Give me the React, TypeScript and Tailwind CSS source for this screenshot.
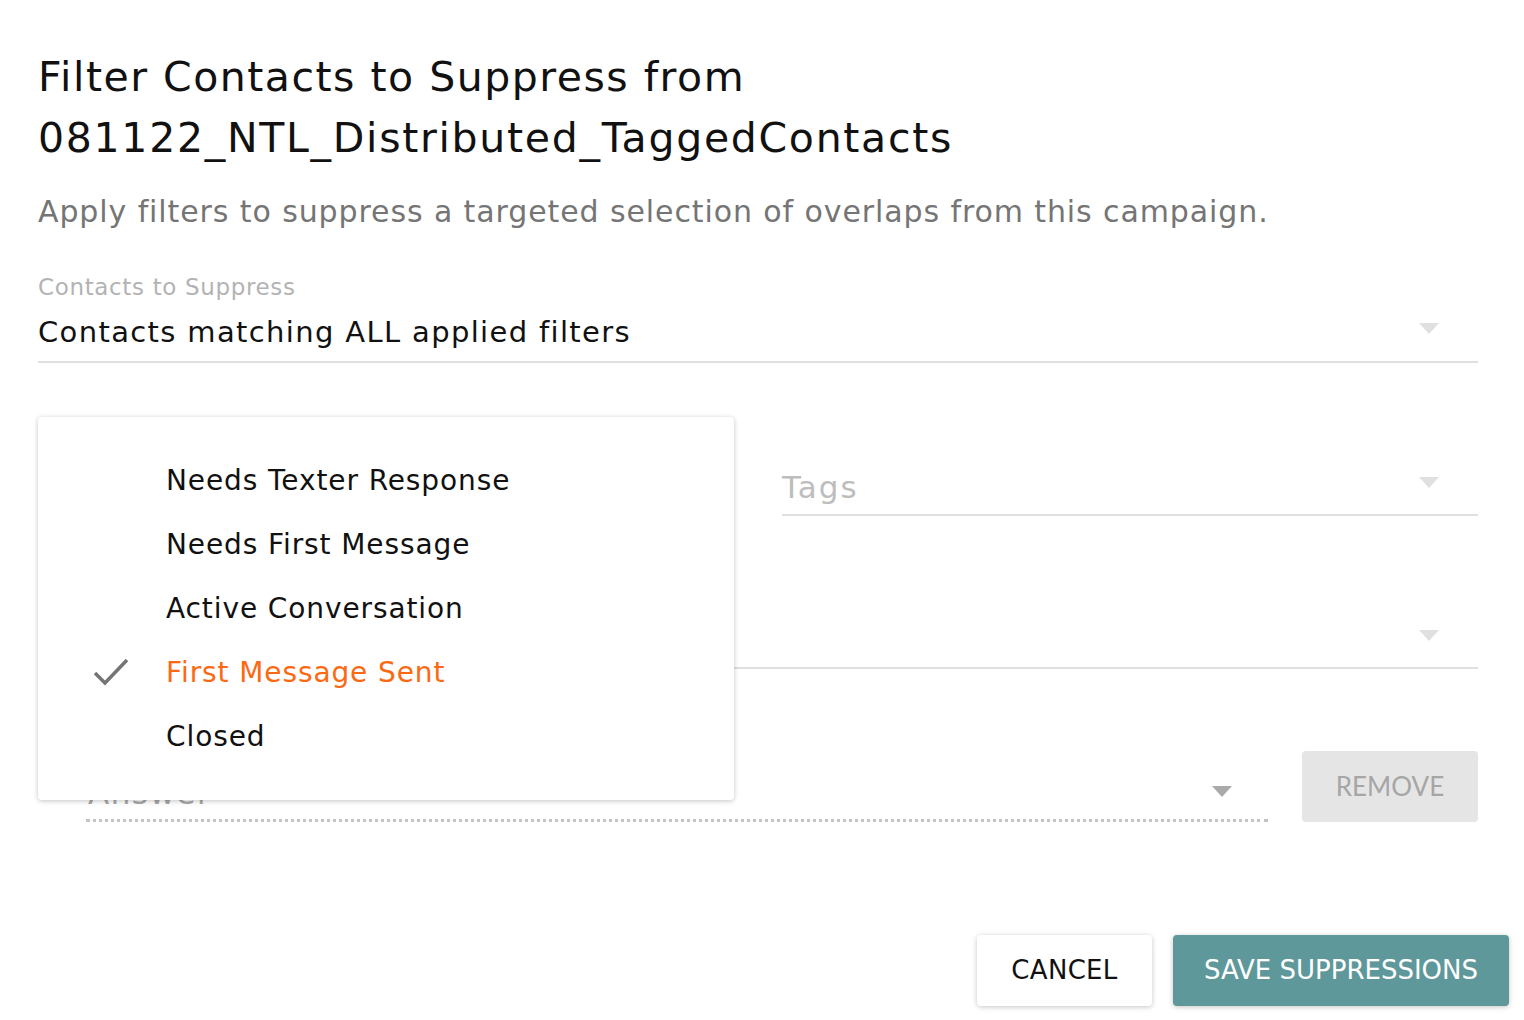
import React from 'react'

const font = { fontFamily: '"DejaVu Sans", "Noto Sans", sans-serif' }

const statuses = [
  { label: 'Needs Texter Response', checked: false },
  { label: 'Needs First Message', checked: false },
  { label: 'Active Conversation', checked: false },
  { label: 'First Message Sent', checked: true },
  { label: 'Closed', checked: false },
]

function Caret({ className = '' }: { className?: string }) {
  return (
    <svg width="20" height="11" viewBox="0 0 20 11" className={className}>
      <path d="M0 0 L20 0 L10 11 Z" fill="currentColor" />
    </svg>
  )
}

function CheckIcon() {
  return (
    <svg width="36" height="28" viewBox="0 0 36 28" fill="none">
      <path d="M2 15 L12 25 L34 2" stroke="#757575" strokeWidth="3.5" />
    </svg>
  )
}

function StatusMenu() {
  return (
    <div className="absolute left-0 top-[54px] z-10 w-[696px] rounded-[4px] bg-white pt-[32px] pb-[31px] shadow-[0_1px_6px_rgba(0,0,0,0.12),0_1px_4px_rgba(0,0,0,0.12)]">
      {statuses.map((s) => (
        <div key={s.label} className="relative flex h-[64px] items-center pl-[128px]">
          {s.checked && (
            <span className="absolute left-[55px] top-[17px]">
              <CheckIcon />
            </span>
          )}
          <span className={`text-[28px] tracking-[0.9px] ${s.checked ? 'text-[#fb6a12]' : 'text-[#111]'}`}>
            {s.label}
          </span>
        </div>
      ))}
    </div>
  )
}

export default function App() {
  return (
    <div className="min-h-screen w-full bg-white text-[#111]" style={font}>
      <div className="px-[38px] pt-[47px]">
        <h1 className="text-[41px] font-normal leading-[61px] tracking-[1.5px]">
          Filter Contacts to Suppress from
          <br />
          <span className="tracking-[1.7px]">081122_NTL_Distributed_TaggedContacts</span>
        </h1>
        <p className="mt-[23px] text-[30px] leading-[40px] tracking-[0.9px] text-[#757575]">
          Apply filters to suppress a targeted selection of overlaps from this campaign.
        </p>

        {/* Contacts to Suppress */}
        <div className="mt-[41px] w-[1440px] border-b-2 border-[#e0e0e0]">
          <div className="text-[23px] leading-[28px] tracking-[0.65px] text-[#b3b3b3]">Contacts to Suppress</div>
          <div className="mt-[11px] mb-[9px] flex h-[40px] items-center justify-between">
            <span className="text-[29px] leading-[40px] tracking-[1.35px]">Contacts matching ALL applied filters</span>
            <Caret className="mr-[39px] mb-[8px] text-[#e0e0e0]" />
          </div>
        </div>

        <div className="relative w-[1440px]">
          <StatusMenu />

          {/* status + tags */}
          <div className="grid h-[153px] grid-cols-2 gap-[48px]">
            <div className="border-b-2 border-[#e0e0e0]" />
            <div className="flex flex-col justify-end border-b-2 border-[#e0e0e0]">
              <div className="mb-[7px] flex h-[40px] items-center justify-between">
                <span className="text-[31px] leading-[40px] tracking-[2px] text-[#bdbdbd]">Tags</span>
                <Caret className="mr-[39px] mb-[10px] text-[#e0e0e0]" />
              </div>
            </div>
          </div>

          {/* question */}
          <div className="flex h-[153px] flex-col justify-end border-b-2 border-[#e0e0e0]">
            <div className="mb-[7px] flex h-[40px] items-center justify-end">
              <Caret className="mr-[39px] mb-[10px] text-[#e0e0e0]" />
            </div>
          </div>

          {/* answer + remove */}
          <div className="flex h-[153px] items-end gap-[34px] pl-[48px]">
            <div className="flex h-[70px] flex-1 flex-col justify-end border-b-[3px] border-dotted border-[#c4c4c4]">
              <div className="mb-[6px] flex h-[40px] items-center justify-between">
                <span className="pl-[2px] text-[31px] leading-[40px] tracking-[1.5px] text-[#a8a8a8]">Answer</span>
                <Caret className="mr-[36px] mb-[4px] text-[#aaaaaa]" />
              </div>
            </div>
            <button
              className="h-[71px] w-[176px] rounded-[4px] bg-[#e5e5e5] text-[26px] text-[#a6a6a6]"
              style={{ fontFamily: '"Lato", "Open Sans", sans-serif' }}
            >
              REMOVE
            </button>
          </div>
        </div>
      </div>

      <div className="mt-[113px] flex justify-end gap-[21px] pr-[15px]">
        <button className="h-[71px] w-[175px] rounded-[4px] bg-white text-[26px] tracking-[0.3px] text-[#111] shadow-[0_1px_6px_rgba(0,0,0,0.12),0_1px_4px_rgba(0,0,0,0.12)]">
          CANCEL
        </button>
        <button className="h-[71px] w-[336px] rounded-[4px] bg-[#5f989b] text-[26px] text-white shadow-[0_1px_6px_rgba(0,0,0,0.12),0_1px_4px_rgba(0,0,0,0.12)]">
          SAVE SUPPRESSIONS
        </button>
      </div>
    </div>
  )
}
